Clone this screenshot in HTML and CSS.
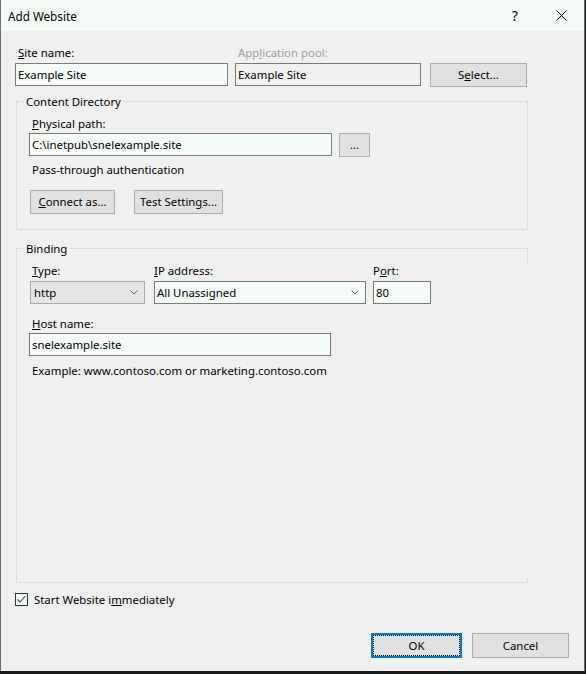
FILE: index.html
```html
<!DOCTYPE html>
<html>
<head>
<meta charset="utf-8">
<title>Add Website</title>
<link rel="stylesheet" href="styles.css">
</head>
<body>
<div class="window">
  <div class="titlebar">
    <span class="title">Add Website</span>
    <span class="help">?</span>
    <span class="close">
      <svg width="11" height="11" viewBox="0 0 11 11"><path d="M0.5 0.5 L10.5 10.5 M10.5 0.5 L0.5 10.5" stroke="#000" stroke-width="1" fill="none"/></svg>
    </span>
  </div>
  <div class="content">
    <div class="row-top">
      <div class="field site">
        <div class="label"><u>S</u>ite name:</div>
        <div class="input">Example Site</div>
      </div>
      <div class="field pool">
        <div class="label disabled">App<u>l</u>ication pool:</div>
        <div class="input readonly">Example Site</div>
      </div>
      <button class="btn btn-select">S<u>e</u>lect...</button>
    </div>

    <fieldset class="group content-dir">
      <legend>Content Directory</legend>
      <div class="label"><u>P</u>hysical path:</div>
      <div class="path-row">
        <div class="input path">C:\inetpub\snelexample.site</div>
        <button class="btn browse">...</button>
      </div>
      <div class="text auth">Pass-through authentication</div>
      <div class="btn-row">
        <button class="btn connect"><u>C</u>onnect as...</button>
        <button class="btn test">Test Settin<u>g</u>s...</button>
      </div>
    </fieldset>

    <fieldset class="group binding">
      <legend>Binding</legend>
      <div class="binding-row">
        <div class="field type">
          <div class="label"><u>T</u>ype:</div>
          <div class="dropdown gray"><span>http</span>
            <svg width="8" height="5" viewBox="0 0 8 5"><path d="M0.5 0.5 L4 4 L7.5 0.5" stroke="#6a6a6a" fill="none"/></svg>
          </div>
        </div>
        <div class="field ip">
          <div class="label"><u>I</u>P address:</div>
          <div class="dropdown"><span>All Unassigned</span>
            <svg width="8" height="5" viewBox="0 0 8 5"><path d="M0.5 0.5 L4 4 L7.5 0.5" stroke="#6a6a6a" fill="none"/></svg>
          </div>
        </div>
        <div class="field port">
          <div class="label">P<u>o</u>rt:</div>
          <div class="input">80</div>
        </div>
      </div>
      <div class="label host-label"><u>H</u>ost name:</div>
      <div class="input host">snelexample.site</div>
      <div class="text example">Example: www.contoso.com or marketing.contoso.com</div>
    </fieldset>

    <div class="check-row">
      <span class="checkbox">
        <svg width="11" height="11" viewBox="0 0 11 11"><path d="M1.5 5.5 L4 8 L9.5 2" stroke="#444" stroke-width="1.1" fill="none"/></svg>
      </span>
      <span class="check-label">Start Website i<u>m</u>mediately</span>
    </div>

    <div class="dialog-buttons">
      <button class="btn ok">OK</button>
      <button class="btn cancel">Cancel</button>
    </div>
  </div>
</div>
</body>
</html>
```
FILE: styles.css
```css
html, body {
  margin: 0;
  padding: 0;
}
body {
  background: #1a1a1a;
  font-family: "Noto Sans", "Open Sans", sans-serif;
  font-size: 11.4px;
  color: #000;
  width: 586px;
  height: 674px;
  overflow: hidden;
}
u {
  text-decoration: underline;
  text-underline-offset: 1px;
}
.window {
  width: 583px;
  height: 671px;
  background: #f0f0f0;
  border-left: 1px solid #6b6b6b;
  border-right: 1px solid #6b6b6b;
  display: flex;
  flex-direction: column;
}
.titlebar {
  height: 31px;
  flex: none;
  background: #f5fbf7;
  display: flex;
  align-items: center;
  padding-left: 7px;
}
.title {
  flex: 1;
  font-size: 11.7px;
}
.help {
  font-size: 13.5px;
  width: 10px;
  margin-right: 36px;
  text-align: center;
}
.close {
  width: 11px;
  height: 11px;
  margin-right: 17px;
  display: flex;
}
.content {
  padding: 14px 15px 0 14px;
  display: flex;
  flex-direction: column;
}
.label {
  line-height: 15px;
  padding-left: 3px;
  margin-bottom: 3px;
  white-space: nowrap;
}
.label.disabled {
  color: #a0a0a0;
}
.input {
  box-sizing: border-box;
  height: 23px;
  line-height: 21px;
  border: 1px solid #7a7a7a;
  background: #f5fbf7;
  padding: 0 2px;
  white-space: nowrap;
  overflow: hidden;
}
.input.readonly {
  background: #f0f0f0;
}
.btn {
  box-sizing: border-box;
  font-family: inherit;
  font-size: inherit;
  color: #000;
  background: #e1e1e1;
  border: 1px solid #adadad;
  height: 24px;
  padding: 0;
  margin: 0;
  line-height: 20px;
}
.row-top {
  display: flex;
  align-items: flex-start;
}
.site {
  width: 213px;
  margin-right: 7px;
}
.pool {
  width: 186px;
  margin-right: 9px;
}
.btn.btn-select {
  width: 97px;
  margin-top: 18px;
}
.group {
  box-sizing: border-box;
  margin: 0 0 0 1px;
  width: 512px;
  border: 1px solid #dcdcdc;
  padding: 7px 0 15px 12px;
  min-width: 0;
}
.group legend {
  line-height: 15px;
  padding: 0 2px;
  margin-left: -5px;
}
.content-dir {
  margin-top: 7px;
}
.content-dir .label {
  margin-bottom: 2px;
}
.path-row {
  display: flex;
  align-items: flex-start;
}
.input.path {
  width: 303px;
}
.btn.browse {
  width: 31px;
  margin-left: 7px;
  line-height: 18px;
}
.text {
  line-height: 15px;
  padding-left: 3px;
  white-space: nowrap;
}
.auth {
  margin-top: 5px;
}
.btn-row {
  display: flex;
  margin-top: 13px;
}
.btn.connect {
  width: 85px;
  margin-left: 1px;
}
.btn.test {
  width: 89px;
  margin-left: 19px;
}
.binding {
  margin-top: 11px;
  height: 342px;
  position: relative;
  border-right-color: transparent;
  padding-top: 7px;
}
.binding::before {
  content: "";
  position: absolute;
  right: -1px;
  top: -8px;
  width: 1px;
  height: 15px;
  background: #dcdcdc;
}
.binding::after {
  content: "";
  position: absolute;
  right: -1px;
  top: 322px;
  width: 1px;
  height: 5px;
  background: #dcdcdc;
}
.binding-row {
  display: flex;
  align-items: flex-start;
}
.field.type {
  width: 115px;
  margin-left: 1px;
}
.field.type .label {
  padding-left: 2px;
}
.field.ip {
  width: 212px;
  margin-left: 9px;
}
.field.ip .label {
  padding-left: 0;
}
.field.port {
  width: 58px;
  margin-left: 7px;
}
.field.port .label {
  padding-left: 0;
}
.dropdown {
  box-sizing: border-box;
  height: 23px;
  border: 1px solid #7a7a7a;
  background: #f5fbf7;
  display: flex;
  align-items: center;
  justify-content: space-between;
  padding: 0 6px 0 2px;
  white-space: nowrap;
}
.dropdown.gray {
  background: #e5e5e5;
  border-color: #acacac;
  padding-left: 3px;
}
.dropdown svg {
  display: block;
}
.host-label {
  margin-top: 12px;
  margin-bottom: 2px;
}
.input.host {
  width: 302px;
}
.example {
  margin-top: 7px;
}
.check-row {
  display: flex;
  align-items: center;
  margin-top: 9px;
  height: 15px;
}
.checkbox {
  box-sizing: border-box;
  width: 13px;
  height: 13px;
  border: 1px solid #333;
  background: #f5fbf7;
  display: flex;
  align-items: center;
  justify-content: center;
}
.checkbox svg {
  display: block;
}
.check-label {
  margin-left: 6px;
  line-height: 15px;
}
.dialog-buttons {
  display: flex;
  justify-content: flex-end;
  margin-top: 26px;
}
.btn.ok {
  width: 91px;
  height: 25px;
  border: 2px solid #0078d7;
  outline: 1px dotted #000;
  outline-offset: -3px;
}
.btn.cancel {
  width: 97px;
  height: 25px;
  margin-left: 10px;
}
```
